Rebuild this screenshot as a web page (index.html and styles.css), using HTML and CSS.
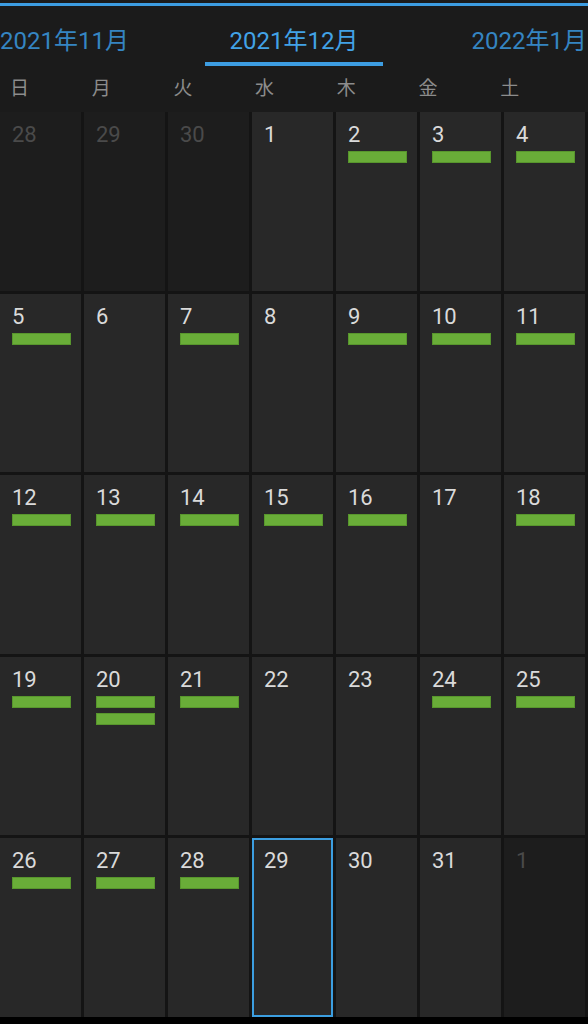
FILE: index.html
```html
<!DOCTYPE html>
<html lang="ja">
<head>
    <meta charset="UTF-8">
    <meta name="viewport" content="width=device-width, initial-scale=1.0">
    <title>カレンダー</title>
    <link rel="stylesheet" href="styles.css">
</head>
<body>
    <div class="app">
        <div class="top-line"></div>
        <div class="months">
            <div class="month-tab prev">2021年11月</div>
            <div class="month-tab current">2021年12月</div>
            <div class="month-tab next">2022年1月</div>
        </div>
        <div class="weekdays">
            <div>日</div><div>月</div><div>火</div><div>水</div><div>木</div><div>金</div><div>土</div>
        </div>
        <div class="calendar">
            <!-- week 1 -->
            <div class="day other"><span class="num">28</span></div>
            <div class="day other"><span class="num">29</span></div>
            <div class="day other"><span class="num">30</span></div>
            <div class="day"><span class="num">1</span></div>
            <div class="day"><span class="num">2</span><div class="bar"></div></div>
            <div class="day"><span class="num">3</span><div class="bar"></div></div>
            <div class="day"><span class="num">4</span><div class="bar"></div></div>
            <!-- week 2 -->
            <div class="day"><span class="num">5</span><div class="bar"></div></div>
            <div class="day"><span class="num">6</span></div>
            <div class="day"><span class="num">7</span><div class="bar"></div></div>
            <div class="day"><span class="num">8</span></div>
            <div class="day"><span class="num">9</span><div class="bar"></div></div>
            <div class="day"><span class="num">10</span><div class="bar"></div></div>
            <div class="day"><span class="num">11</span><div class="bar"></div></div>
            <!-- week 3 -->
            <div class="day"><span class="num">12</span><div class="bar"></div></div>
            <div class="day"><span class="num">13</span><div class="bar"></div></div>
            <div class="day"><span class="num">14</span><div class="bar"></div></div>
            <div class="day"><span class="num">15</span><div class="bar"></div></div>
            <div class="day"><span class="num">16</span><div class="bar"></div></div>
            <div class="day"><span class="num">17</span></div>
            <div class="day"><span class="num">18</span><div class="bar"></div></div>
            <!-- week 4 -->
            <div class="day"><span class="num">19</span><div class="bar"></div></div>
            <div class="day"><span class="num">20</span><div class="bar"></div><div class="bar"></div></div>
            <div class="day"><span class="num">21</span><div class="bar"></div></div>
            <div class="day"><span class="num">22</span></div>
            <div class="day"><span class="num">23</span></div>
            <div class="day"><span class="num">24</span><div class="bar"></div></div>
            <div class="day"><span class="num">25</span><div class="bar"></div></div>
            <!-- week 5 -->
            <div class="day"><span class="num">26</span><div class="bar"></div></div>
            <div class="day"><span class="num">27</span><div class="bar"></div></div>
            <div class="day"><span class="num">28</span><div class="bar"></div></div>
            <div class="day today"><span class="num">29</span></div>
            <div class="day"><span class="num">30</span></div>
            <div class="day"><span class="num">31</span></div>
            <div class="day other"><span class="num">1</span></div>
        </div>
    </div>
</body>
</html>
```

FILE: styles.css
```css
body {
    margin: 0;
    background-color: #000;
    font-family: Roboto, "Noto Sans CJK JP", sans-serif;
}
.app {
    width: 588px;
    height: 1017px;
    background-color: #1b1b1b;
    overflow: hidden;
}
.top-line {
    height: 3px;
    margin-top: 3px;
    background-color: #3d9de2;
}
.months {
    display: grid;
    grid-template-columns: 1fr auto 1fr;
    align-items: start;
    padding-top: 23px;
}
.month-tab {
    font-size: 24px;
    line-height: 24px;
    padding-bottom: 9px;
    color: #3585c2;
    white-space: nowrap;
}
.month-tab.prev {
    justify-self: start;
}
.month-tab.next {
    justify-self: end;
    padding-right: 1px;
}
.month-tab.current {
    color: #42a2e6;
    padding-left: 25px;
    padding-right: 25px;
    border-bottom: 4px solid #3d9de2;
}
.weekdays {
    display: grid;
    grid-template-columns: repeat(7, 81.7px);
    padding-left: 10px;
    margin-top: 13px;
    margin-bottom: 13px;
    font-size: 19px;
    line-height: 20px;
    color: #8c8c8c;
}
.calendar {
    display: grid;
    grid-template-columns: repeat(7, 81px);
    grid-template-rows: repeat(5, 1fr);
    gap: 3px;
    height: 905px;
    background-color: #141414;
}
.day {
    background-color: #282828;
    padding: 12px 10px 0 12px;
}
.day .num {
    display: block;
    font-size: 22px;
    line-height: 22px;
    color: #dadada;
}
.day.other {
    background-color: #1d1d1d;
}
.day.other .num {
    color: #4a4a4a;
}
.day.today {
    box-shadow: inset 0 0 0 2px #3c9ee0;
}
.bar {
    height: 12px;
    margin-top: 5px;
    background-color: #69ad38;
    box-shadow: inset 0 0 0 1px #58962d;
}
```
